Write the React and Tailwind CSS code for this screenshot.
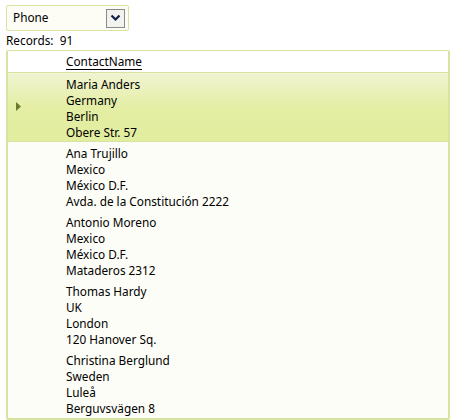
import React from "react";

const rows = [
  ["Maria Anders", "Germany", "Berlin", "Obere Str. 57"],
  ["Ana Trujillo", "Mexico", "México D.F.", "Avda. de la Constitución 2222"],
  ["Antonio Moreno", "Mexico", "México D.F.", "Mataderos 2312"],
  ["Thomas Hardy", "UK", "London", "120 Hanover Sq."],
  ["Christina Berglund", "Sweden", "Luleå", "Berguvsvägen 8"],
];

export default function App() {
  return (
    <div
      className="w-[460px] h-[420px] bg-white overflow-hidden text-[11.8px] text-black"
      style={{ fontFamily: '"Segoe UI", "Noto Sans", "Open Sans", sans-serif' }}
    >
      <div className="pt-[5px] pl-[6px]">
        <div className="w-[123px] h-[26px] border border-[#d7e3a0] rounded-[2px] bg-[#fdfdf6] flex items-center justify-between pl-[6px] pr-[3px]">
          <span className="leading-none">Phone</span>
          <div className="w-[19px] h-[19px] border border-[#8a8a8a] bg-[#f2f2ee] flex items-center justify-center">
            <svg width="11" height="8" viewBox="0 0 11 8">
              <path d="M1.5 1.5 L5.5 5.5 L9.5 1.5" stroke="#10204a" strokeWidth="2.2" fill="none" />
            </svg>
          </div>
        </div>
        <div className="h-[19px] flex items-center leading-none">Records:&nbsp; 91</div>
      </div>
      <div className="ml-[6px] w-[444px] h-[370px] border-x-2 border-b-2 border-t border-[#d7e3a0] rounded-[2px] bg-[#fdfdf7] overflow-hidden">
        <div className="h-[22px] bg-white border-b border-[#d7e3a0] flex items-center pl-[58px]">
          <span className="underline underline-offset-[3px] decoration-1">ContactName</span>
        </div>
        {rows.map((r, i) => (
          <div
            key={i}
            className={
              i === 0
                ? "relative h-[69px] pt-[3px] pl-[58px] border-b border-[#d7e3a0] bg-gradient-to-b from-[#f0f4d2] via-[#e4eea4] to-[#e3ed9f]"
                : "h-[69px] pt-[3px] pl-[58px]"
            }
          >
            {i === 0 && (
              <svg className="absolute left-[8px] top-[29px]" width="6" height="9" viewBox="0 0 6 9">
                <path d="M0 0 L5 4.5 L0 9 Z" fill="#6b7b2c" />
              </svg>
            )}
            {r.map((t, j) => (
              <div key={j} className="h-[16px] leading-[16px] whitespace-nowrap">
                {t}
              </div>
            ))}
          </div>
        ))}
      </div>
    </div>
  );
}
